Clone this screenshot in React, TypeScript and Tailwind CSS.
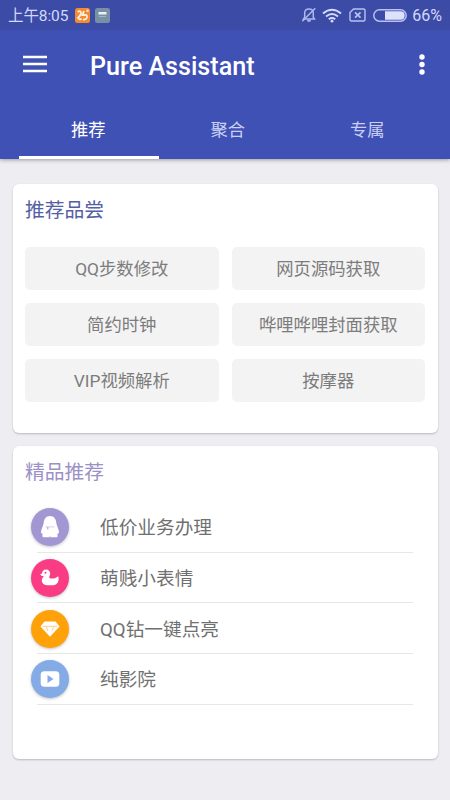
import React from 'react';

interface Tool {
  name: string;
}

interface Service {
  name: string;
  color: string;
  icon: React.ReactNode;
}

const tabs = ['推荐', '聚合', '专属'];

const tools: Tool[] = [
  { name: 'QQ步数修改' },
  { name: '网页源码获取' },
  { name: '简约时钟' },
  { name: '哗哩哗哩封面获取' },
  { name: 'VIP视频解析' },
  { name: '按摩器' },
];

const PenguinIcon = () => (
  <svg width="20" height="24" viewBox="0 0 20 24" fill="#fff">
    <path d="M10 1C6.200 1 3.900 3.800 3.700 8C3.500 10.500 1 14.500 1 17.200C1 18.200 1.800 18.800 2.600 18.600C2.300 19.800 2.300 21 2.700 22.200H17.300C17.700 21 17.700 19.800 17.400 18.600C18.200 18.800 19 18.200 19 17.200C19 14.500 16.500 10.500 16.300 8C16.100 3.800 13.800 1 10 1Z" />
    <path d="M5.500 11.900H14.500" stroke="#c3bbe3" strokeWidth=".7" fill="none" />
    <path d="M7.800 12V14.500" stroke="#a297d2" strokeWidth=".9" fill="none" />
    <path d="M9 22.200L10 21.300L11 22.200Z" fill="#a297d2" />
  </svg>
);

const DuckIcon = () => (
  <svg width="20" height="20" viewBox="0 0 20 20" fill="#fff">
    <path
      fillRule="evenodd"
      d="M6 1.500C8.500 1.500 10.200 3.200 10.200 5.500C10.200 7.200 9.200 8.200 9.200 9.200C9.200 10.200 10.200 10.600 12 10.600C14.800 10.600 16.300 9.800 18.200 8.200C19.700 12.800 17.400 17.200 12.800 17.200H7.200C3.800 17.200 1.800 15.200 1.800 12.600C1.800 10.400 3.200 9.500 3.700 8C1.800 8.100 .6 7.500 .3 6C1.200 6.200 1.900 5.900 2.100 5C2.400 3 3.800 1.500 6 1.500ZM5.500 3.700A1 1 0 1 0 5.500 5.700A1 1 0 1 0 5.500 3.700Z"
    />
  </svg>
);

const DiamondIcon = () => (
  <svg width="20" height="18" viewBox="0 0 20 18">
    <path d="M4.500 1.500H15.500L19.500 6.500L10 16.800L.5 6.500Z" fill="#fff" />
    <path d="M2.500 6.300H17.500M6.200 6.500L8 11M13.800 6.500L12 11" fill="none" stroke="#ffc465" strokeWidth=".8" />
  </svg>
);

const VideoIcon = () => (
  <svg width="20" height="18" viewBox="0 0 20 18">
    <rect x=".7" y="1.200" width="18.600" height="15.600" rx="3.500" fill="#fff" />
    <path d="M7.500 5V13L13.500 9Z" fill="#84abe6" />
  </svg>
);

const services: Service[] = [
  { name: '低价业务办理', color: 'bg-[#a297d2]', icon: <PenguinIcon /> },
  { name: '萌贱小表情', color: 'bg-[#fa3c84]', icon: <DuckIcon /> },
  { name: 'QQ钻一键点亮', color: 'bg-[#ffa20a]', icon: <DiamondIcon /> },
  { name: '纯影院', color: 'bg-[#84abe6]', icon: <VideoIcon /> },
];

const StatusBar = () => (
  <div className="flex h-[30px] items-center bg-[#3b4ba6] pr-2 pl-2 text-[15.500px] text-[#d3d9fb]">
    <span className="pt-[3px] tracking-[-0.1px] whitespace-nowrap">上午8:05</span>
    <svg className="ml-[7px]" width="15" height="15" viewBox="0 0 15 15">
      <rect width="15" height="15" rx="2.500" fill="#f58a32" />
      <path d="M2.500 4Q6 2 6 5Q5.500 8 3 10Q5 12.500 6.500 10.500M9 3L7.500 7H10.500Q12.500 7 12 9.500Q11 12 8 11.500" fill="none" stroke="#fff2dc" strokeWidth="1.800" />
      <circle cx="12.500" cy="2.700" r="1.300" fill="#ffe2ca" />
    </svg>
    <svg className="ml-[5px]" width="15" height="15" viewBox="0 0 15 15">
      <rect width="15" height="15" rx="2.500" fill="#7890a6" />
      <rect x="3.500" y="4" width="8" height="2.500" fill="#eaf3f3" />
      <path d="M4 8.500H11" stroke="#a3b5c2" />
    </svg>
    <svg className="ml-auto" width="16" height="16" viewBox="0 0 16 16" fill="none" stroke="#aeb9ee" strokeWidth="1.500">
      <path d="M2.500 12H13.500L12.300 10.200V6C12.300 3.600 10.500 2 8 2S3.700 3.600 3.700 6V10.200Z" />
      <path d="M1.300 14.300L14.300 1.300" />
      <path d="M6.300 13.700H9.700" strokeWidth="2" />
    </svg>
    <svg className="ml-[5px]" width="20" height="15" viewBox="0 0 20 15" fill="none" stroke="#d3d9fb" strokeWidth="1.900">
      <path d="M1 5.500Q10-2 19 5.500M4 8.500Q10 3.500 16 8.500M6.800 11.300Q10 8.800 13.200 11.300" />
      <circle cx="10" cy="13.200" r="1.400" fill="#d3d9fb" stroke="none" />
    </svg>
    <svg className="ml-[7px]" width="17" height="14" viewBox="0 0 17 14" fill="none" stroke="#b8c2f0" strokeWidth="1.400">
      <path d="M4.500 1H14.500Q16 1 16 2.500V11.500Q16 13 14.500 13H2.500Q1 13 1 11.500V4.500Z" />
      <path d="M6 4.300L11.500 9.700M11.500 4.300L6 9.700" strokeWidth="1.700" />
    </svg>
    <svg className="ml-[7px]" width="34" height="13" viewBox="0 0 34 13">
      <rect x=".8" y=".8" width="32.400" height="11.400" rx="5.700" fill="none" stroke="#b8c2f0" strokeWidth="1.500" />
      <path d="M12 2.300H27.500Q31.700 2.300 31.700 6.500T27.500 10.700H12Z" fill="#dde1fb" />
    </svg>
    <span className="ml-[5px] pt-[1px] text-[16px]">66%</span>
  </div>
);

const Header = () => (
  <header className="relative bg-[#3f51b5] shadow-[0_1px_4px_rgba(0,0,0,0.35)]">
    <StatusBar />
    <div className="flex h-[71px] items-center pr-[25px] pl-[23px]">
      <svg width="24" height="18" viewBox="0 0 24 18" stroke="#fff" strokeWidth="2.500" className="-mt-[3px]">
        <path d="M0 2H24M0 9H24M0 16H24" />
      </svg>
      <h1 className="mt-[3px] ml-[43px] text-[25.150px] leading-none font-medium text-white">Pure Assistant</h1>
      <svg width="6" height="22" viewBox="0 0 6 22" fill="#fff" className="-mt-[2px] ml-auto">
        <circle cx="3" cy="3" r="2.700" />
        <circle cx="3" cy="10.500" r="2.700" />
        <circle cx="3" cy="18" r="2.700" />
      </svg>
    </div>
    <nav className="flex h-[58px] pr-[12px] pl-[19px]">
      {tabs.map((tab, i) => (
        <button
          key={tab}
          className={`flex w-[139.500px] items-center justify-center border-b-[3px] pt-[4px] pr-[1px] text-[17.300px] ${
            i === 0 ? 'border-white text-white' : 'border-transparent text-[#c9d0f3]'
          }`}
        >
          {tab}
        </button>
      ))}
    </nav>
  </header>
);

const App: React.FC = () => {
  return (
    <div className="h-[800px] w-[450px] overflow-hidden bg-[#eeedf2] font-[Roboto,'Noto_Sans_CJK_SC',sans-serif]">
      <Header />
      <main className="flex flex-col gap-[13px] px-[12.500px] pt-[24.500px]">
        <section className="h-[249.500px] rounded-md bg-white px-[12.500px] pt-[14px] shadow-[0_1px_2px_rgba(0,0,0,0.22)]">
          <h2 className="text-[19.800px] leading-[26px] text-[#5360a5]">推荐品尝</h2>
          <div className="mt-[23px] grid grid-cols-2 gap-[13px]">
            {tools.map((tool) => (
              <button
                key={tool.name}
                className="h-[43.300px] rounded-[5px] bg-[#f3f3f3] pt-[3px] text-[17.330px] whitespace-nowrap text-[#7c7c7c]"
              >
                {tool.name}
              </button>
            ))}
          </div>
        </section>
        <section className="h-[312.500px] rounded-md bg-white px-[12.500px] pt-[14px] shadow-[0_1px_2px_rgba(0,0,0,0.22)]">
          <h2 className="text-[19.800px] leading-[26px] text-[#9b91c6]">精品推荐</h2>
          <ul className="mt-[16px] mr-[12.500px] ml-[12px]">
            {services.map((service) => (
              <li key={service.name} className="flex h-[50.670px] items-center border-b border-[#e7e7e7] pt-[1px]">
                <span
                  className={`-ml-[6px] flex size-[38px] items-center justify-center rounded-full shadow-[0_1px_3px_rgba(0,0,0,0.25)] ${service.color}`}
                >
                  {service.icon}
                </span>
                <span className="ml-[31px] pt-[2px] text-[18.670px] text-[#707070]">{service.name}</span>
              </li>
            ))}
          </ul>
        </section>
      </main>
    </div>
  );
};

export default App;
